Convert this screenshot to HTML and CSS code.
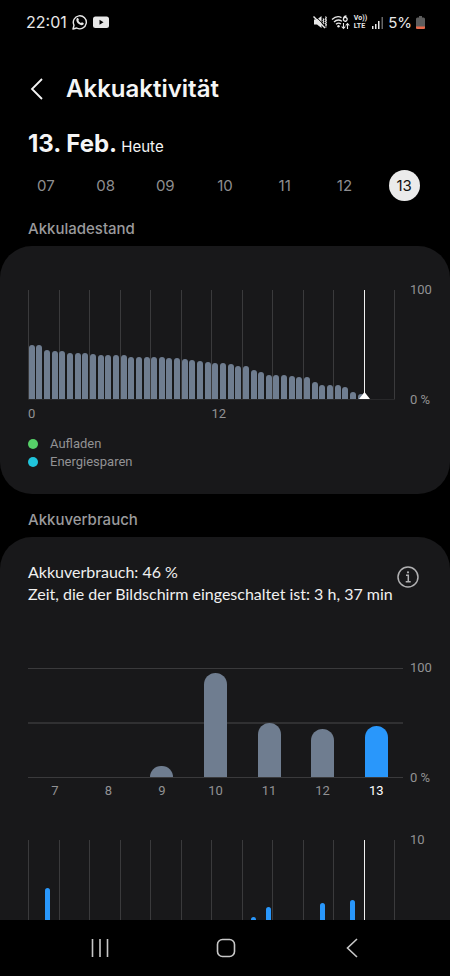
FILE: index.html
```
<!DOCTYPE html>
<html lang="de">
<head>
    <meta charset="UTF-8">
    <meta name="viewport" content="width=device-width, initial-scale=1.0">
    <title>Akkuaktivität</title>
    <link rel="stylesheet" href="styles.css">
</head>
<body>
    <div class="status-bar">
        <div class="status-group">
            <span class="clock">22:01</span>
            <svg class="icon-app" viewBox="0 0 16 16" fill="none">
                <path d="M1 15l1-3.800A6.500 6.500 0 1 1 4.700 14z" stroke="#e8e8e8" stroke-width="1.400" stroke-linejoin="round"/>
                <path d="M5 4.300c.5-.5 1-.4 1.300.1l.6 1.300c.1.400-.5.900-.5 1.100.5 1 1.400 1.800 2.400 2.300.4 0 .8-.9 1.200-.8l1.400.7c.5.300.4.900 0 1.400-.8.900-2 .9-3.200.4C6.300 9.900 5 8.600 4.500 7c-.3-1-.2-2 .5-2.700z" fill="#e8e8e8"/>
            </svg>
            <svg class="icon-app" viewBox="0 0 16 16">
                <rect x="0" y="2.500" width="16" height="11.500" rx="2.500" fill="#e8e8e8"/>
                <path d="M6.500 5.800v5l4-2.500z" fill="#000"/>
            </svg>
        </div>
        <div class="status-group status-right">
            <svg class="icon-mute" viewBox="0 0 14 14" fill="none" stroke="#e8e8e8">
                <path d="M1 4.500h3L8.500 1v12L4 9.500H1z" fill="#e8e8e8" stroke="none"/>
                <path d="M10 3.500l.8 1-.8 1 .8 1-.8 1 .8 1-.8 1M12.500 1.500l.8 1.200-.8 1.200.8 1.200-.8 1.200.8 1.200-.8 1.200.8 1.200-.8 1.200.8 1.200" stroke-width="1.200"/>
                <path d="M2 .8l11 11" stroke="#000" stroke-width="1"/>
                <path d="M.5 1.500l11.500 11.500" stroke-width="1.500"/>
            </svg>
            <svg class="icon-wifi" viewBox="0 0 19 15" fill="none" stroke="#e8e8e8" stroke-width="1.300">
                <path d="M1 4.500C4 1.700 8 1.300 10.500 2.600M3 7c2-2 5.200-2.500 8-.8M5 9.300c1.500-1.400 3.500-1.500 5-.4"/>
                <circle cx="7.500" cy="11.200" r="1.200" fill="#e8e8e8" stroke="none"/>
                <path d="M15.500 1C13 1.200 12.400 3 12.400 4.500a1.900 1.900 0 1 0 .2-1"/>
                <path d="M12.500 8v5.500M10.700 11.500l1.800 2 1.800-2M16.500 14V8.500M14.700 10.500l1.800-2 1.800 2" stroke-width="1.100"/>
            </svg>
            <span class="volte"><span>Vo))</span><span>LTE</span></span>
            <svg class="icon-signal" viewBox="0 0 13 13">
                <path d="M1 10h1.500v3H1zM4 8h1.500v5H4zM7 5h1.500v8H7z" fill="#e8e8e8"/>
                <path d="M10.500 1H12v12h-1.500z" fill="#666"/>
            </svg>
            <span class="percent">5%</span>
            <svg class="icon-battery" viewBox="0 0 9 13">
                <path d="M3 0h3v1.500h1.500Q9 1.500 9 3v8.500Q9 13 7.500 13h-6Q0 13 0 11.500V3q0-1.500 1.500-1.500H3z" fill="#5c5c5c"/>
                <path d="M0 10.500h9v1Q9 13 7.500 13h-6Q0 13 0 11.500z" fill="#e8694a"/>
            </svg>
        </div>
    </div>

    <main class="screen">
        <header class="header">
            <button class="back" aria-label="Zurück">
                <svg class="icon-back" viewBox="0 0 14 22" fill="none" stroke="#f5f5f5" stroke-width="1.800">
                    <path d="M12 1L2 11l10 10"/>
                </svg>
            </button>
            <h1>Akkuaktivität</h1>
        </header>

        <p class="date"><strong>13. Feb.</strong> Heute</p>
        <div class="days">
            <button class="day">07</button>
            <button class="day">08</button>
            <button class="day">09</button>
            <button class="day">10</button>
            <button class="day">11</button>
            <button class="day">12</button>
            <button class="day selected">13</button>
        </div>

        <h2>Akkuladestand</h2>
        <section class="card">
            <div class="chart">
                <div class="plot" id="levelChart">
                    <div class="grid-lines"></div>
                    <div class="bars"></div>
                    <div class="now"><svg class="now-marker" viewBox="0 0 11 7"><path d="M5.500 0L11 7H0z" fill="#fff"/></svg></div>
                </div>
                <div class="scale"><span>100</span><span>0 %</span></div>
            </div>
            <div class="hours"><span>0</span><span>12</span></div>
            <ul class="legend">
                <li><span class="dot charging"></span>Aufladen</li>
                <li><span class="dot saving"></span>Energiesparen</li>
            </ul>
        </section>

        <h2>Akkuverbrauch</h2>
        <section class="card usage">
            <div class="summary">
                <p>Akkuverbrauch: 46&#8239;%<br>Zeit, die der Bildschirm eingeschaltet ist: 3 h, 37 min</p>
                <button class="info" aria-label="Info">
                    <svg class="icon-info" viewBox="0 0 22 22" fill="none" stroke="#b0b0b2" stroke-width="1.500">
                        <circle cx="11" cy="11" r="10"/>
                        <path d="M9 9.300h2.300V15.500M8.700 15.800h5"/>
                        <circle cx="11" cy="6.300" r="1.100" fill="#b0b0b2" stroke="none"/>
                    </svg>
                </button>
            </div>
            <div class="chart">
                <div class="week" id="weekChart"></div>
                <div class="scale"><span>100</span><span>0 %</span></div>
            </div>
            <div class="week-days">
                <span>7</span><span>8</span><span>9</span><span>10</span><span>11</span><span>12</span><span class="today">13</span>
            </div>
            <div class="chart">
                <div class="plot usage-plot" id="usageChart">
                    <div class="grid-lines"></div>
                    <div class="bars"></div>
                    <div class="now"></div>
                </div>
                <div class="scale"><span>10</span></div>
            </div>
        </section>
    </main>

    <nav class="nav-bar">
        <button aria-label="Letzte Apps">
            <svg class="icon-nav" viewBox="0 0 20 20" fill="none" stroke="#c8c8c8" stroke-width="1.600"><path d="M2.500 1v18M10 1v18M17.500 1v18"/></svg>
        </button>
        <button aria-label="Startbildschirm">
            <svg class="icon-nav" viewBox="0 0 20 20" fill="none" stroke="#c8c8c8" stroke-width="1.600"><rect x="1.500" y="1.500" width="17" height="17" rx="5"/></svg>
        </button>
        <button aria-label="Zurück">
            <svg class="icon-nav" viewBox="0 0 20 20" fill="none" stroke="#c8c8c8" stroke-width="1.600"><path d="M15 1l-9.500 9L15 19"/></svg>
        </button>
    </nav>

    <script>
        // half-hour slots, in percent of the chart height
        const level = [
            50, 50, 45, 44, 44, 42, 42, 42, 41, 40, 40, 40,
            40, 39, 39, 39, 39, 39, 38, 38, 37, 36, 35, 34,
            33, 33, 32, 30, 30, 27, 25, 22, 22, 22, 21, 20,
            20, 16, 13, 13, 13, 11, 6, 5
        ];
        const usage = { 2: 56, 29: 29, 31: 39, 38: 42, 42: 45 };
        const week = [0, 0, 10, 96, 50, 44, 47];

        const drawBars = (parent, values) => {
            values.forEach(value => {
                const bar = document.createElement('span');
                bar.className = 'bar';
                bar.style.height = `${value}%`;
                parent.appendChild(bar);
            });
        };

        const slots = [];
        for (let i = 0; i < 48; i++) {
            slots.push(usage[i] || 0);
        }

        document.querySelectorAll('.grid-lines').forEach(lines => {
            for (let i = 0; i < 12; i++) {
                lines.appendChild(document.createElement('span'));
            }
        });

        drawBars(document.querySelector('#levelChart .bars'), level);
        drawBars(document.querySelector('#usageChart .bars'), slots);
        drawBars(document.getElementById('weekChart'), week);
    </script>
</body>
</html>
```

FILE: styles.css
```
* {
    box-sizing: border-box;
}

body {
    margin: 0;
    height: 100vh;
    display: flex;
    flex-direction: column;
    background-color: #000000;
    color: #f5f5f5;
    font-family: Inter, "Noto Sans", sans-serif;
}

h1, h2, p, ul {
    margin: 0;
    padding: 0;
}

button {
    padding: 0;
    border: 0;
    background: none;
    color: inherit;
    font: inherit;
    cursor: pointer;
}

svg {
    display: block;
}

.status-bar {
    display: flex;
    justify-content: space-between;
    flex-shrink: 0;
    height: 44px;
    padding: 0 25px 0 26px;
    color: #e8e8e8;
}

.status-group {
    display: flex;
    align-items: center;
    gap: 5px;
}

.status-right {
    gap: 4px;
}

.clock {
    font-size: 16px;
}

.percent {
    font-size: 15px;
}

.icon-app {
    width: 16px;
    height: 16px;
}

.icon-mute {
    width: 14px;
    height: 14px;
}

.icon-wifi {
    width: 19px;
    height: 15px;
}

.volte {
    display: flex;
    flex-direction: column;
    font-family: Roboto, sans-serif;
    font-size: 7px;
    line-height: 8px;
    font-weight: 700;
}

.icon-signal {
    width: 13px;
    height: 13px;
}

.icon-battery {
    width: 9px;
    height: 13px;
}

.screen {
    flex: 1;
    min-height: 0;
    overflow-y: auto;
    scrollbar-width: none;
}

.header {
    display: flex;
    align-items: center;
    gap: 22px;
    padding: 30px 28px 0;
    height: 60px;
}

.back {
    display: flex;
    width: 16px;
    justify-content: flex-end;
}

.icon-back {
    width: 14px;
    height: 22px;
}

h1 {
    font-size: 24px;
    line-height: 30px;
    font-weight: 600;
}

.date {
    padding: 24px 28px 0;
    font-size: 15px;
    line-height: 32px;
}

.date strong {
    font-size: 24px;
    font-weight: 700;
}

.days {
    display: grid;
    grid-template-columns: repeat(7, 1fr);
    justify-items: center;
    padding: 7px 16px 2px;
}

.day {
    width: 31px;
    height: 31px;
    border-radius: 50%;
    color: #8e8e90;
    font-size: 15px;
}

.day.selected {
    background-color: #ebebeb;
    color: #111111;
}

h2 {
    padding: 16px 28px 7px;
    color: #9a9a9c;
    font-size: 15px;
    line-height: 20px;
    font-weight: 500;
}

.card {
    padding: 44px 0 23px 28px;
    border-radius: 32px;
    background-color: #18181a;
    font-family: Roboto, sans-serif;
    font-size: 13px;
    color: #929294;
}

.chart {
    display: flex;
    height: 110px;
}

.plot {
    display: grid;
    grid-template: 100% / 100%;
    flex: 1;
    border-bottom: 1px solid #28282a;
}

.grid-lines, .bars, .now {
    grid-area: 1 / 1;
}

.grid-lines {
    display: grid;
    grid-template-columns: repeat(12, 1fr);
    border-right: 1px solid #3a3a3c;
}

.grid-lines span {
    border-left: 1px solid #3a3a3c;
}

.bars {
    display: grid;
    grid-template-columns: repeat(48, 1fr);
    grid-template-rows: 100%;
    align-items: end;
    justify-items: center;
}

.bars .bar {
    width: 6px;
    border-radius: 3px 3px 0 0;
    background-color: #6f7d90;
}

.usage-plot .bars .bar {
    width: 5px;
    background-color: #2997fb;
}

/* 22:00 of 24 hours */
.now {
    display: flex;
    align-items: flex-end;
    justify-content: center;
    width: 11px;
    margin-left: calc(100% * 11 / 12 - 5px);
    background: linear-gradient(#f0f0f0, #f0f0f0) center / 1px 100% no-repeat;
}

.now-marker {
    width: 11px;
    height: 7px;
}

.scale {
    display: flex;
    flex-direction: column;
    justify-content: space-between;
    width: 55px;
    padding-left: 15px;
    line-height: 16px;
    margin: -8px 0;
}

.hours {
    display: grid;
    grid-template-columns: 1fr 1fr;
    width: calc(100% - 55px);
    padding-top: 6px;
    line-height: 16px;
}

.legend {
    padding-top: 13px;
    list-style: none;
    line-height: 18px;
}

.legend li {
    display: flex;
    align-items: center;
    gap: 12px;
}

.dot {
    width: 10px;
    height: 10px;
    border-radius: 50%;
}

.charging {
    background-color: #56d068;
}

.saving {
    background-color: #20c4dc;
}

.usage {
    padding-top: 24px;
}

.summary {
    display: flex;
    justify-content: space-between;
    padding: 0 31px 63px 0;
    color: #f0f0f0;
    font-family: Lato, "Noto Sans", sans-serif;
    font-size: 16px;
    line-height: 22px;
}

.info {
    align-self: flex-start;
    margin-top: 5px;
}

.icon-info {
    width: 22px;
    height: 22px;
}

.week {
    display: grid;
    grid-template-columns: repeat(7, 1fr);
    grid-template-rows: 100%;
    align-items: end;
    justify-items: center;
    flex: 1;
    border-top: 1px solid #3a3a3c;
    border-bottom: 1px solid #3a3a3c;
    background: linear-gradient(#303032, #303032) center / 100% 2px no-repeat;
}

.week .bar {
    width: 23px;
    border-radius: 12px 12px 0 0;
    background-color: #6f7d90;
}

.week .bar:last-child {
    background-color: #2997fb;
}

.week + .scale {
    width: 47px;
    padding-left: 7px;
}

.week-days {
    display: grid;
    grid-template-columns: repeat(7, 1fr);
    width: calc(100% - 47px);
    padding: 5px 0 41px;
    line-height: 16px;
    text-align: center;
}

.today {
    color: #ffffff;
}

.nav-bar {
    display: flex;
    justify-content: space-around;
    align-items: center;
    flex-shrink: 0;
    height: 56px;
    padding: 0 35px 0 37px;
    background-color: #000000;
}

.icon-nav {
    width: 20px;
    height: 20px;
}
```
